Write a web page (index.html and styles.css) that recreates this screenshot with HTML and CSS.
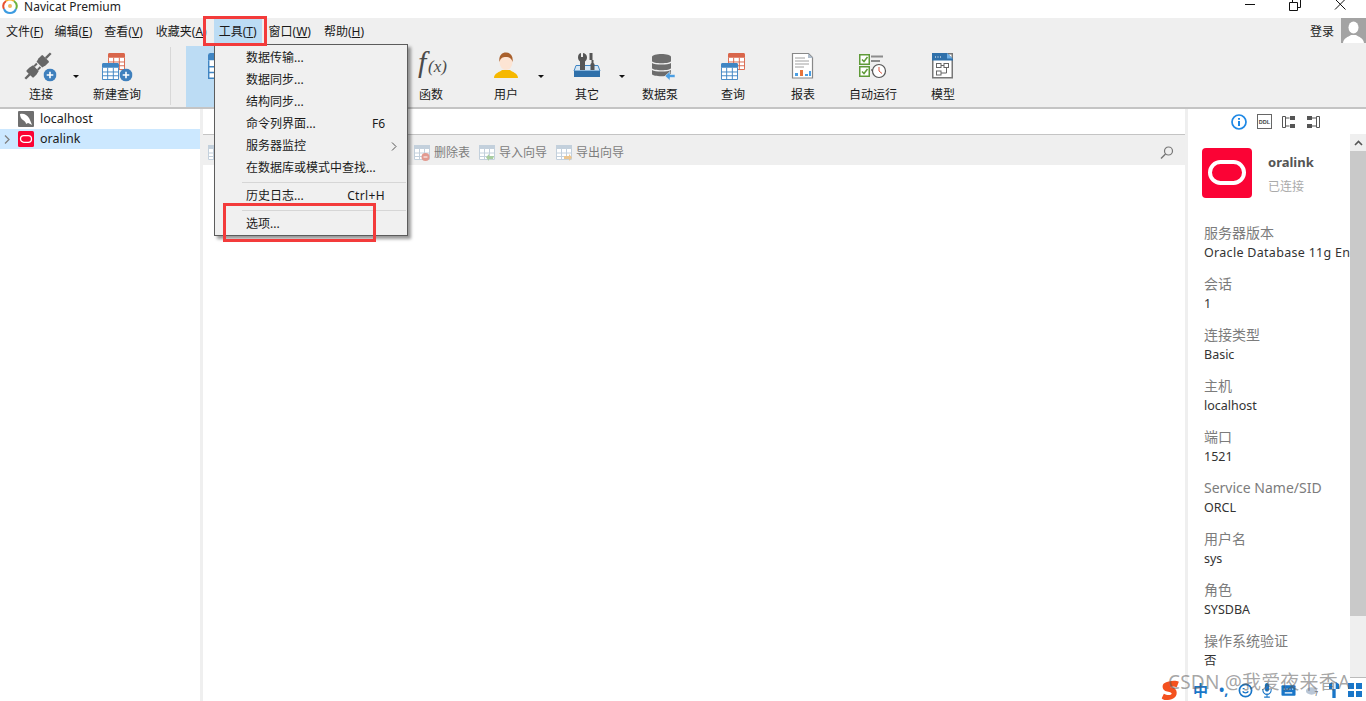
FILE: index.html
```html
<!DOCTYPE html>
<html lang="zh">
<head>
<meta charset="utf-8">
<title>Navicat Premium</title>
<link rel="stylesheet" href="styles.css">
</head>
<body>
<svg class="defs" width="0" height="0">
  <symbol id="tbl" viewBox="0 0 18 18">
    <rect x="0" y="0" width="18" height="18" rx="1.5" fill="#fff"/>
    <path d="M1.5 0h15A1.5 1.5 0 0 1 18 1.5V5H0V1.5A1.5 1.5 0 0 1 1.5 0z" fill="currentColor"/>
    <path d="M.5 5v12.5h17V5M6 5v12.5M12 5v12.5M.5 9.5h17M.5 13.5h17" fill="none" stroke="currentColor"/>
  </symbol>
  <symbol id="plus" viewBox="0 0 13 13">
    <circle cx="6.5" cy="6.5" r="6.5" fill="#3f80bd"/>
    <path d="M6.5 3.2v6.6M3.2 6.5h6.6" stroke="#fff" stroke-width="1.6"/>
  </symbol>
  <symbol id="dim" viewBox="0 0 16 16">
    <rect width="16" height="15" fill="#fff"/>
    <rect width="16" height="4" fill="#c3d0dc"/>
    <path d="M.5 4v10.5h15V4M5.5 4v10.5M10.5 4v10.5M.5 8h15M.5 11.5h15" fill="none" stroke="#c3d0dc"/>
  </symbol>
</svg>

<header class="titlebar">
  <svg class="applogo" viewBox="0 0 16 16" width="16" height="16">
    <path d="M2 11A6.5 6.5 0 0 1 4 3" fill="none" stroke="#e8502f" stroke-width="2"/>
    <path d="M4 3a6.5 6.5 0 0 1 8 0" fill="none" stroke="#f2b233" stroke-width="2"/>
    <path d="M12 3a6.5 6.5 0 0 1 2 8" fill="none" stroke="#6cb33f" stroke-width="2"/>
    <path d="M14 11a6.5 6.5 0 0 1-12 0" fill="none" stroke="#3c9be0" stroke-width="2"/>
    <circle cx="8" cy="8" r="2" fill="#f0b860"/>
  </svg>
  <span class="apptitle">Navicat Premium</span>
  <div class="winctl">
    <svg width="12" height="12" viewBox="0 0 12 12"><path d="M1 5.5h10" stroke="#111"/></svg>
    <svg width="12" height="12" viewBox="0 0 12 12"><path d="M.5 3.5h8v8h-8zM3.500 3V.5h8v8H9" fill="none" stroke="#111"/></svg>
    <svg width="12" height="12" viewBox="0 0 12 12"><path d="M1 0l10.500 10.500M11.500 0L1 10.500" stroke="#111"/></svg>
  </div>
</header>

<nav class="menubar">
  <span class="mi m1">文件(<u>F</u>)</span>
  <span class="mi m2">编辑(<u>E</u>)</span>
  <span class="mi m3">查看(<u>V</u>)</span>
  <span class="mi m4">收藏夹(<u>A</u>)</span>
  <span class="mi m5 mi-open">工具(<u>T</u>)</span>
  <span class="mi m6">窗口(<u>W</u>)</span>
  <span class="mi">帮助(<u>H</u>)</span>
  <span class="login">登录</span>
  <svg class="avatar" viewBox="0 0 25 25" width="25" height="25">
    <rect width="25" height="25" fill="#a3a3a3"/>
    <ellipse cx="12.500" cy="9.500" rx="5" ry="6" fill="#fff"/>
    <path d="M2 25c.5-5 5-6 8-8h5c3 2 7.500 3 8 8z" fill="#fff"/>
  </svg>
</nav>

<section class="toolbar">
  <div class="tb has-caret mr6">
    <svg class="tbi" viewBox="0 0 36 30" width="36" height="30">
      <g transform="rotate(-45 15 15)" fill="#666">
        <rect x="-3" y="13.800" width="7" height="2.400"/>
        <path d="M4 10h4l4 1v8l-4 1H4a1 1 0 0 1-1-1v-8a1 1 0 0 1 1-1z"/>
        <rect x="12" y="11.500" width="4" height="2"/>
        <rect x="12" y="16.500" width="4" height="2"/>
        <path d="M17 11l4-1h4a1 1 0 0 1 1 1v8a1 1 0 0 1-1 1h-4l-4-1z"/>
        <rect x="26" y="13.800" width="7" height="2.400"/>
      </g>
      <use href="#plus" x="20.500" y="17.500" width="13" height="13"/>
    </svg>
    <span>连接</span>
  </div>
  <div class="tb mr6">
    <svg class="tbi" viewBox="0 0 36 30" width="36" height="30">
      <use href="#tbl" class="c-o" x="9" y="2" width="17" height="17"/>
      <use href="#tbl" class="c-b" x="3" y="12" width="17" height="17"/>
      <use href="#plus" x="20.500" y="17.500" width="13" height="13"/>
    </svg>
    <span>新建查询</span>
  </div>
  <div class="tb-sep"></div>
  <div class="tb tb-active">
    <svg class="tbi" viewBox="0 0 36 30" width="36" height="30">
      <use href="#tbl" class="c-b" x="5" y="2" width="26" height="26"/>
    </svg>
    <span>表</span>
  </div>
  <div class="tb-hidden"></div>
  <div class="tb mr5">
    <svg class="tbi" viewBox="0 0 36 30" width="36" height="30">
      <text x="5" y="21" class="fx">f</text>
      <text x="15" y="21" class="fx fx-s">(x)</text>
    </svg>
    <span>函数</span>
  </div>
  <div class="tb has-caret mr11">
    <svg class="tbi" viewBox="0 0 36 30" width="36" height="30">
      <path d="M6 27c0-5 6-6 8-8h8c2 2 8 3 8 8z" fill="#f6b800"/>
      <ellipse cx="18" cy="11" rx="6.500" ry="8" fill="#fde4d3"/>
      <path d="M11.500 11c-1-6 2-9.500 6.500-9.500s7.500 3.500 6.500 9.500c-1-4-3-5-6.500-5s-5.500 1-6.500 5z" fill="#a9602c"/>
    </svg>
    <span>用户</span>
  </div>
  <div class="tb has-caret mr3">
    <svg class="tbi" viewBox="0 0 36 30" width="36" height="30">
      <path d="M8 14.500H7L5 20h26l-2-5.500h-1z" fill="#d5e6f4" stroke="#3c84c4"/>
      <rect x="5" y="20" width="26" height="6" fill="#2f70aa"/>
      <path d="M12 2v4h2V2c2.500.5 4 2 4 4.500 0 2-1 3-2 4V19h-5v-8.500c-1-1-2-2-2-4C9 4 10 2.500 12 2z" fill="#555"/>
      <path d="M20.500 2h3v7h1v3l1 1v6h-4v-6l1-1V9h-2z" fill="#555"/>
    </svg>
    <span>其它</span>
  </div>
  <div class="tb mr3">
    <svg class="tbi" viewBox="0 0 36 30" width="36" height="30">
      <g fill="#6d6d6d">
        <path d="M10 6c0-4 19-4 19 0v4c0 3-19 3-19 0z"/>
        <path d="M10 12c3 2 16 2 19 0v5c0 3-19 3-19 0z"/>
        <path d="M10 19c3 2 16 2 19 0v4c0 3-19 3-19 0z"/>
      </g>
      <path d="M23 25l5-4.500v3h5v3h-5v3z" fill="#4a9fe4" stroke="#efefef" stroke-width=".6"/>
    </svg>
    <span>数据泵</span>
  </div>
  <div class="tb">
    <svg class="tbi" viewBox="0 0 36 30" width="36" height="30">
      <use href="#tbl" class="c-o" x="13" y="2" width="17" height="17"/>
      <use href="#tbl" class="c-b" x="6" y="12" width="17" height="17"/>
    </svg>
    <span>查询</span>
  </div>
  <div class="tb">
    <svg class="tbi" viewBox="0 0 36 30" width="36" height="30">
      <path d="M7.500 2.500h16l4 4v20.500h-20z" fill="#fff" stroke="#888" stroke-width="1.200"/>
      <path d="M23 2.500v4.500h5z" fill="#aebccb"/>
      <path d="M10 7h10M10 10h14M10 13h14M10 16h9" stroke="#a0a0a0"/>
      <rect x="10" y="22" width="3" height="3" fill="#4a9fe4"/><rect x="15" y="19" width="3" height="6" fill="#e8743b"/><rect x="20" y="23" width="3" height="2" fill="#4a9fe4"/><rect x="24" y="20" width="2" height="5" fill="#4a9fe4"/>
    </svg>
    <span>报表</span>
  </div>
  <div class="tb">
    <svg class="tbi" viewBox="0 0 36 30" width="36" height="30">
      <g fill="#fff" stroke="#5f9a38" stroke-width="1.500"><rect x="4.750" y="3.750" width="9.500" height="9.500"/><rect x="4.750" y="15.750" width="9.500" height="9.500"/></g>
      <path d="M7 8.500l2 2 3.500-4.500M7 20.500l2 2 3.500-4.500" fill="none" stroke="#5f9a38" stroke-width="1.500"/>
      <path d="M16 5.500h12M16 10h9M16 19h3" stroke="#8c8c8c" stroke-width="1.800"/>
      <circle cx="24" cy="20" r="6.500" fill="#fff" stroke="#555" stroke-width="1.200"/>
      <path d="M24 16v4l3 2.500" fill="none" stroke="#d9533c"/>
    </svg>
    <span>自动运行</span>
  </div>
  <div class="tb">
    <svg class="tbi" viewBox="0 0 36 30" width="36" height="30">
      <rect x="7.750" y="2.750" width="19.500" height="24" fill="#fff" stroke="#777" stroke-width="1.500"/>
      <path d="M7 2h15l6 6v1.500H7z" fill="#2f70aa"/>
      <path d="M22 2l5.500 5.500H22z" fill="#6fb0e6"/>
      <path d="M10 6h1M12.500 6h1M15 6h1" stroke="#fff"/>
      <g fill="#fff" stroke="#666"><rect x="11.500" y="12.500" width="4.500" height="4"/><rect x="19" y="12.500" width="4.500" height="4"/><rect x="11.500" y="20" width="4.500" height="4"/></g>
      <path d="M16 14.500h3M21.500 16.500v5.500H16" fill="none" stroke="#666"/>
    </svg>
    <span>模型</span>
  </div>
</section>

<main class="main">
  <aside class="sidebar">
    <div class="row">
      <span class="chev"></span>
      <svg class="dbi" viewBox="0 0 16 16" width="16" height="16"><rect width="16" height="16" rx="1" fill="#6f6f6f"/><path d="M2 3c4-1 7 1 9 4 1 2 2 4 3 7-2-1-3-2-4-2l-2 1c0-1-1-3-3-4S2 5 2 3z" fill="#fff"/></svg>
      <span class="row-label">localhost</span>
    </div>
    <div class="row row-sel">
      <svg class="chev" viewBox="0 0 6 9" width="6" height="9"><path d="M1 .500l4 4-4 4" fill="none" stroke="#808080" stroke-width="1.300"/></svg>
      <svg class="dbi" viewBox="0 0 16 16" width="16" height="16"><rect width="16" height="16" rx="1.500" fill="#fb0335"/><rect x="2.500" y="4.700" width="11" height="6.600" rx="3.300" fill="none" stroke="#fff" stroke-width="1.300"/></svg>
      <span class="row-label">oralink</span>
    </div>
  </aside>

  <section class="center">
    <div class="tabs"></div>
    <div class="subbar">
      <svg class="si si-first" width="16" height="16"><use href="#dim" width="16" height="16"/></svg>
      <span class="sb-gap"></span>
      <span class="sb-item">
        <svg class="si" viewBox="0 0 16 16" width="16" height="16"><use href="#dim" width="16" height="16"/><circle cx="11.500" cy="12" r="4" fill="#e29a90"/><path d="M9.500 12h4" stroke="#fff"/></svg>
        删除表</span>
      <span class="sb-item">
        <svg class="si" viewBox="0 0 16 16" width="16" height="16"><use href="#dim" width="16" height="16"/><path d="M15 11h-5v-2l-3 3.500 3 3.500v-2h4z" fill="#a9cda0"/></svg>
        导入向导</span>
      <span class="sb-item">
        <svg class="si" viewBox="0 0 16 16" width="16" height="16"><use href="#dim" width="16" height="16"/><path d="M8 11h5V9l3 3.500-3 3.500v-2H8z" fill="#ecc690"/></svg>
        导出向导</span>
      <svg class="search" viewBox="0 0 14 14" width="14" height="14"><circle cx="8.500" cy="5" r="4" fill="none" stroke="#777" stroke-width="1.200"/><path d="M5.500 8L1 12.500" stroke="#777" stroke-width="1.400"/></svg>
    </div>
    <div class="content"></div>
  </section>

  <aside class="panel">
    <div class="panel-body">
      <div class="ptabs">
        <svg viewBox="0 0 16 16" width="16" height="16"><circle cx="8" cy="8" r="7" fill="#fff" stroke="#1e88e5" stroke-width="1.700"/><path d="M8 4v1.700M8 7v5" stroke="#1e88e5" stroke-width="2"/></svg>
        <svg viewBox="0 0 15 15" width="15" height="15"><rect x=".5" y=".5" width="14" height="14" fill="#fff" stroke="#666"/><text x="7.500" y="10" class="ddl">DDL</text></svg>
        <svg viewBox="0 0 14 14" width="14" height="14"><path d="M3.500 1.500h-3v11h3M3.500 1.500v11M3.500 3h4M3.500 11h4" fill="none" stroke="#555"/><rect x="8" y="1" width="5" height="4" fill="#555"/><rect x="8" y="9" width="5" height="4" fill="#555"/></svg>
        <svg viewBox="0 0 14 14" width="14" height="14"><path d="M10.500 1.500h3v11h-3zM6 3h4M6 11h4" fill="none" stroke="#555"/><rect x="1" y="1" width="5" height="4" fill="#555"/><rect x="1" y="9" width="5" height="4" fill="#555"/></svg>
      </div>
      <div class="conn">
        <svg viewBox="0 0 50 50" width="50" height="50"><rect width="50" height="50" rx="4" fill="#fb0335"/><rect x="8" y="14" width="34" height="21" rx="10.500" fill="none" stroke="#fff" stroke-width="4"/></svg>
        <div class="conn-text">
          <div class="conn-name">oralink</div>
          <div class="conn-state">已连接</div>
        </div>
      </div>
      <dl class="props">
        <dt>服务器版本</dt><dd class="dd-long">Oracle Database 11g Enterprise Edition</dd>
        <dt>会话</dt><dd>1</dd>
        <dt>连接类型</dt><dd>Basic</dd>
        <dt>主机</dt><dd>localhost</dd>
        <dt>端口</dt><dd>1521</dd>
        <dt>Service Name/SID</dt><dd>ORCL</dd>
        <dt>用户名</dt><dd>sys</dd>
        <dt>角色</dt><dd>SYSDBA</dd>
        <dt>操作系统验证</dt><dd>否</dd>
      </dl>
    </div>
    <div class="scroll">
      <div class="sc-up"><svg viewBox="0 0 9 6" width="9" height="6"><path d="M1 5l3.500-3.500L8 5" fill="none" stroke="#555" stroke-width="1.600"/></svg></div>
      <div class="sc-thumb"></div>
    </div>
  </aside>
</main>

<div class="dropdown">
  <div class="dd-row"><span>数据传输...</span></div>
  <div class="dd-row"><span>数据同步...</span></div>
  <div class="dd-row"><span>结构同步...</span></div>
  <div class="dd-row"><span>命令列界面...</span><span>F6</span></div>
  <div class="dd-row"><span>服务器监控</span><svg class="dd-arrow" viewBox="0 0 6 9" width="6" height="9"><path d="M1 .500l4 4-4 4" fill="none" stroke="#555"/></svg></div>
  <div class="dd-row"><span>在数据库或模式中查找...</span></div>
  <div class="dd-sep"></div>
  <div class="dd-row"><span>历史日志...</span><span class="dd-key">Ctrl+H</span></div>
  <div class="dd-sep"></div>
  <div class="dd-row"><span>选项...</span></div>
</div>

<div class="mark mark-tools"></div>
<div class="mark mark-options"></div>

<div class="ime">
  <svg viewBox="0 0 28 24" width="20" height="22" preserveAspectRatio="none"><path d="M4 5c6-3 16-4 21-2l-3 6c-4-1-7-1-9 0 5 0 9 2 9 6 0 6-8 8-15 8-3 0-5-1-6-2l3-5c4 2 10 2 11 0 0-2-6-2-9-3C2 12 1 7 4 5z" fill="#f4511e"/></svg>
  <span class="ime-zh">中</span>
  <span class="ime-dot">•,</span>
  <svg viewBox="0 0 16 16" width="15" height="15"><circle cx="8" cy="8" r="6.500" fill="none" stroke="#1976c8" stroke-width="1.800"/><path d="M5 9c1 2 5 2 6 0M5 6h2" fill="none" stroke="#1976c8" stroke-width="1.500"/></svg>
  <svg viewBox="0 0 14 18" width="10" height="16" preserveAspectRatio="none"><rect x="4" y="1" width="6" height="10" rx="3" fill="#1976c8"/><path d="M1 8c0 8 12 8 12 0M7 13v4M3 17h8" fill="none" stroke="#1976c8" stroke-width="1.500"/></svg>
  <svg viewBox="0 0 16 14" width="15" height="14"><rect x=".5" y="2" width="15" height="11" rx="1" fill="#1976c8"/><path d="M3 6h1M6 6h1M9 6h1M12 6h1M4 10h8" stroke="#fff" stroke-width="1.400"/></svg>
  <svg viewBox="0 0 16 14" width="15" height="14"><ellipse cx="7" cy="8" rx="6" ry="4" fill="#b9c6d6"/><text x="10" y="13" class="ime-n">7</text></svg>
  <svg viewBox="0 0 12 16" width="10" height="16" preserveAspectRatio="none"><path d="M0 2l4-2v16h4V0l4 2v5H0z" fill="#1976c8"/></svg>
  <svg viewBox="0 0 14 14" width="14" height="14"><g fill="#1976c8"><rect width="6" height="6"/><rect x="8" width="6" height="6"/><rect y="8" width="6" height="6"/><rect x="8" y="8" width="6" height="6"/></g></svg>
</div>
<div class="watermark">CSDN @我爱夜来香A</div>
</body>
</html>
```

FILE: styles.css
```css
* { box-sizing: border-box; }
html, body { margin: 0; height: 100%; }
body {
  height: 701px;
  overflow: hidden;
  display: flex;
  flex-direction: column;
  background: #fff;
  color: #1a1a1a;
  font: 12px/16px "Noto Sans", "Noto Sans CJK SC", sans-serif;
  position: relative;
}
.defs { position: absolute; }
.c-o { color: #d9654a; }
.c-b { color: #3f85c3; }

.titlebar { height: 18px; display: flex; align-items: flex-start; background: #fff; flex: none; }
.applogo { margin: -2px 0 0 2px; }
.apptitle { margin-left: 6px; font-size: 12px; line-height: 13px; letter-spacing: .02px; color: #222; }
.winctl { margin-left: auto; display: flex; gap: 33px; padding-right: 20px; margin-top: -1px; }

.menubar { height: 26px; flex: none; background: #efefef; display: flex; align-items: center; padding-left: 6px; }
.mi { height: 26px; padding-top: 2px; line-height: 24px; white-space: nowrap; margin-right: 11px; }
.m1 { margin-right: 11px; }
.m2 { margin-right: 12px; }
.m3 { margin-right: 13px; }
.m4 { margin-right: 8px; }
.m5 { margin-right: 7px; }
.m6 { margin-right: 13px; }
.mi-open { background: #bcdcf4; padding-left: 5px; padding-right: 5px; margin-left: -1px; }
.mi u { text-underline-offset: 1px; }
.login { margin-left: auto; margin-right: 7px; padding-top: 2px; }
.avatar { align-self: flex-start; }

.toolbar { height: 65px; flex: none; background: #efefef; border-bottom: 2px solid #c4c4c4; display: flex; padding-left: 6px; }
.tb { width: 70px; height: 63px; display: flex; flex-direction: column; align-items: center; position: relative; padding-top: 7px; white-space: nowrap; }
.tbi { height: 30px; display: block; margin-bottom: 6px; overflow: visible; }
.tb span { line-height: 16px; }
.has-caret::after {
  content: ""; position: absolute; right: -3px; top: 31px;
  border: 3px solid transparent; border-top: 3px solid #111; border-bottom: 0;
}
.mr3 { margin-right: 3px; }
.mr5 { margin-right: 5px; }
.mr6 { margin-right: 6px; }
.mr11 { margin-right: 11px; }
.tb-sep { width: 1px; height: 58px; background: #d8d8d8; margin: 3px 15px 0 12px; }
.tb-active { background: #bcdcf4; margin-top: 2px; height: 61px; padding-top: 5px; }
.tb-hidden { width: 140px; }
.fx { font: italic 30px "Liberation Serif", serif; fill: #4a4a4a; }
.fx-s { font-size: 17px; }

.main { flex: 1; display: flex; min-height: 0; }
.sidebar { width: 203px; flex: none; background: #fff; border-right: 3px solid #efefef; font-size: 12.500px; }
.row { height: 20px; display: flex; align-items: center; white-space: nowrap; line-height: 20px; }
.row-sel { background: #cce8ff; }
.row-label { margin-top: -1px; }
.chev { width: 6px; margin-left: 4px; flex: none; }
.dbi { margin: 0 6px 0 8px; flex: none; }

.center { flex: 1; display: flex; flex-direction: column; min-width: 0; border-right: 3px solid #efefef; }
.tabs { height: 26px; flex: none; border-bottom: 1px solid #c4c4c4; }
.subbar { height: 30px; flex: none; background: #efefef; display: flex; align-items: center; color: #7d7d7d; white-space: nowrap; padding-left: 5px; padding-top: 6px; }
.si { flex: none; }
.sb-gap { width: 190px; flex: none; }
.sb-item { display: flex; align-items: center; gap: 4px; margin-right: 9px; }
.search { margin-left: auto; margin-right: 11px; }
.content { flex: 1; background: #fff; }

.panel { width: 178px; flex: none; display: flex; background: #fff; position: relative; }
.panel-body { width: 162px; flex: none; overflow: hidden; }
.ptabs { height: 25px; display: flex; align-items: center; gap: 10px; padding-left: 43px; }
.ddl { font: bold 5.500px "Liberation Sans", sans-serif; fill: #444; text-anchor: middle; }
.conn { display: flex; margin: 14px 0 0 14px; gap: 16px; }
.conn-text { padding-top: 5px; }
.conn-name { font-weight: 700; font-size: 13px; line-height: 18px; color: #555; }
.conn-state { margin-top: 8px; line-height: 16px; color: #aaa; }
.props { margin: 25px 0 0 16px; }
.props dt { font-size: 14px; line-height: 20px; color: #7c7c7c; white-space: nowrap; }
.props dd { margin: 0 0 11px; font-size: 12.500px; line-height: 20px; color: #333; white-space: nowrap; }
.props .dd-long { letter-spacing: .3px; }

.scroll { width: 16px; flex: none; margin-top: 25px; height: 544px; background: #efefef; border-bottom: 1px solid #bbb; display: flex; flex-direction: column; }
.sc-up { height: 17px; display: flex; align-items: center; justify-content: center; flex: none; }
.sc-thumb { height: 465px; background: #c9c9c9; flex: none; }

.dropdown {
  position: absolute; left: 214px; top: 44px; width: 194px; height: 192px;
  background: #f0f0f0; border: 1px solid #5c5c5c; padding-top: 2px;
  box-shadow: 3px 3px 3px rgba(0,0,0,.4); z-index: 5; white-space: nowrap;
}
.dd-row { height: 22px; line-height: 22px; display: flex; justify-content: space-between; padding: 0 22px 0 31px; }
.dd-arrow { align-self: center; margin-right: -12px; }
.dd-key { letter-spacing: .35px; }
.dd-sep { height: 1px; background: #d6d6d6; margin: 3px 1px 2px 27px; }

.mark { position: absolute; border: 3px solid #f33b3b; z-index: 6; }
.mark-tools { left: 203px; top: 16px; width: 64px; height: 30px; }
.mark-options { left: 223px; top: 203px; width: 153px; height: 39px; }

.ime { position: absolute; left: 1161px; top: 679px; display: flex; align-items: center; gap: 9px; z-index: 7; height: 22px; }
.ime-zh { color: #1976c8; font-weight: 700; font-size: 15px; margin-left: 3px; }
.ime-dot { color: #1976c8; font-weight: 700; font-size: 14px; margin-left: 2px; width: 10px; }
.ime-n { font: 7px "Liberation Sans", sans-serif; fill: #555; }
.watermark { position: absolute; left: 1168px; top: 670px; font-size: 19px; line-height: 24px; letter-spacing: .2px; color: rgba(90,90,90,.55); z-index: 8; white-space: nowrap; }
```
